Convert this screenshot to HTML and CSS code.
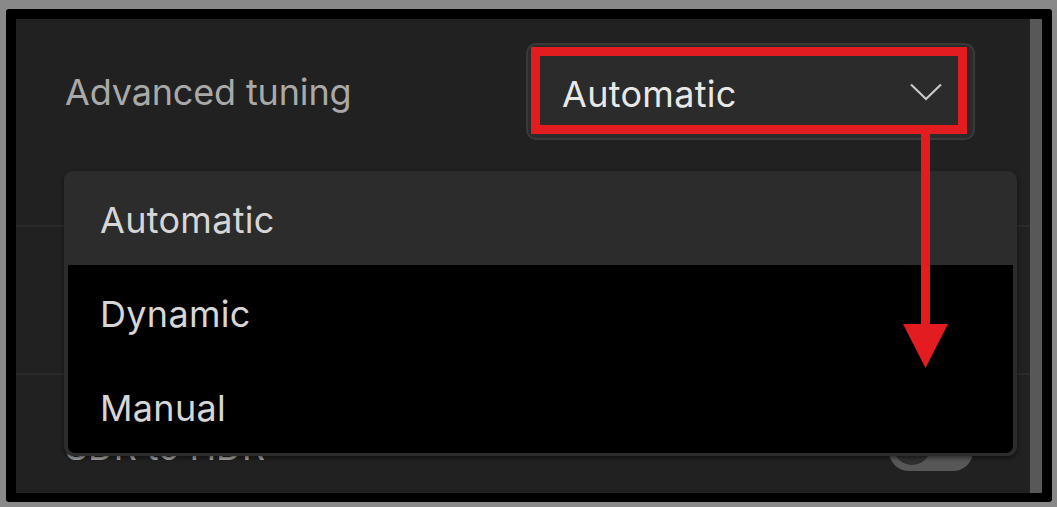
FILE: index.html
```html
<!DOCTYPE html>
<html>
<head>
<meta charset="utf-8">
<link rel="stylesheet" href="styles.css">
</head>
<body>
<div class="frame">
  <div class="window">
    <div class="panel">
      <div class="row row-tuning">
        <div class="setting">
          <span class="label">Advanced tuning</span>
          <div class="select">
            <span class="select-value">Automatic</span>
            <svg class="chevron" width="32" height="18" viewBox="0 0 32 18"><path d="M1 1.5 L16 16 L31 1.5" fill="none" stroke="#c9c9c9" stroke-width="2.2"/></svg>
          </div>
        </div>
      </div>
      <div class="row row-hidden"></div>
      <div class="row row-sdr">
        <span class="label sdr-label">SDR to HDR</span>
        <div class="toggle"><span class="knob"></span></div>
      </div>

      <div class="menu">
        <div class="menu-item selected">Automatic</div>
        <div class="menu-list">
          <div class="menu-item">Dynamic</div>
          <div class="menu-item">Manual</div>
        </div>
      </div>
    </div>
    <div class="scrollbar"></div>

    <div class="callout-box"></div>
    <svg class="callout-arrow" width="48" height="240" viewBox="0 0 48 240"><rect x="19" y="0" width="9" height="195" fill="#e31d1f"/><path d="M1 192 L46 192 L23.5 236 Z" fill="#e31d1f"/></svg>
  </div>
</div>
</body>
</html>
```

FILE: styles.css
```css
* { box-sizing: border-box; }
html, body { margin: 0; padding: 0; }
body {
  background: #898989;
  font-family: "Inter", "Noto Sans", sans-serif;
  width: 1057px;
  height: 507px;
  overflow: hidden;
}
.frame {
  margin: 9px 0 0 6px;
  width: 1046px;
  height: 493px;
  background: #000;
  border-radius: 3px;
  padding: 10px 10px 9px 10px;
}
.window {
  position: relative;
  display: flex;
  height: 100%;
}
.panel {
  position: relative;
  flex: 1;
  background: #212121;
  overflow: hidden;
}
.scrollbar {
  width: 12px;
  background: #585858;
}
.row {
  border-bottom: 2px solid #2b2b2b;
}
.row-tuning {
  height: 208px;
  padding: 24px 55px 0 49px;
}
.setting {
  display: flex;
  align-items: center;
  justify-content: space-between;
}
.label {
  color: #a9a9a9;
  font-size: 36px;
  letter-spacing: -0.15px;
  line-height: 1;
}
.select {
  width: 449px;
  height: 97px;
  background: #2b2b2b;
  border: 2px solid #393939;
  border-radius: 10px;
  display: flex;
  align-items: center;
  justify-content: space-between;
  padding: 4px 31px 0 34px;
}
.select-value {
  color: #e8e8e8;
  font-size: 36px;
  letter-spacing: 0.3px;
}
.chevron { margin-top: -4px; }
.row-hidden { height: 148px; }
.row-sdr {
  border-bottom: 0;
  display: flex;
  align-items: center;
  justify-content: space-between;
  padding: 56px 57px 0 49px;
}
.sdr-label { margin-top: -8px; }
.toggle {
  position: relative;
  width: 84px;
  height: 40px;
  border-radius: 20px;
  background: #575757;
}
.knob {
  position: absolute;
  left: 6px;
  top: 4px;
  width: 34px;
  height: 30px;
  border-radius: 50%;
  background: #2f2f2f;
}
.menu {
  position: absolute;
  left: 48px;
  top: 152px;
  width: 953px;
  height: 285px;
  background: #2c2c2c;
  border-radius: 9px;
  box-shadow: 0 2px 4px rgba(0,0,0,0.5);
  display: flex;
  flex-direction: column;
}
.menu-item {
  height: 94px;
  display: flex;
  align-items: center;
  padding: 2px 0 0 36px;
  color: #d6d6d6;
  font-size: 36px;
  letter-spacing: 0.3px;
}
.menu .selected { height: 96px; padding-top: 4px; }
.menu-list {
  flex: 1;
  margin: 0 4px 3px 4px;
  background: #000;
  border-radius: 0 0 7px 7px;
  display: flex;
  flex-direction: column;
}
.menu-list .menu-item {
  height: 94px;
  padding-top: 4px;
  padding-left: 32px;
}
.callout-box {
  position: absolute;
  left: 515px;
  top: 28px;
  width: 436px;
  height: 87px;
  border: 9px solid #e31d1f;
}
.callout-arrow {
  position: absolute;
  left: 886px;
  top: 113px;
}
```
